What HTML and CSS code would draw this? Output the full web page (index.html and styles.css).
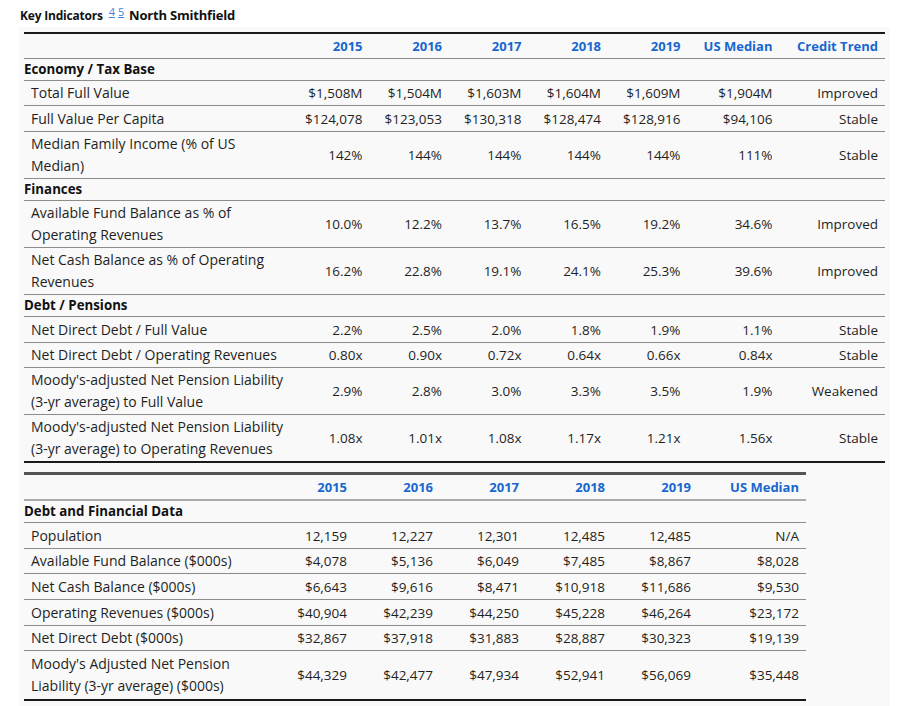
FILE: index.html
```html
<!DOCTYPE html>
<html>
<head>
<meta charset="utf-8">
<link rel="stylesheet" href="styles.css">
</head>
<body>
<div class="title">Key Indicators <sup><a href="#">4</a> <a href="#">5</a></sup> <span class="place">North Smithfield</span></div>
<div class="panel">
<table class="tbl tbl1">
  <colgroup><col class="c-label1"><col class="c-y1"><col class="c-y1"><col class="c-y1"><col class="c-y1"><col class="c-y1"><col class="c-med1"><col></colgroup>
  <thead>
    <tr class="head"><th></th><th>2015</th><th>2016</th><th>2017</th><th>2018</th><th>2019</th><th>US Median</th><th>Credit Trend</th></tr>
  </thead>
  <tbody>
    <tr class="sec"><td>Economy / Tax Base</td><td></td><td></td><td></td><td></td><td></td><td></td><td></td></tr>
    <tr><td>Total Full Value</td><td>$1,508M</td><td>$1,504M</td><td>$1,603M</td><td>$1,604M</td><td>$1,609M</td><td>$1,904M</td><td>Improved</td></tr>
    <tr><td>Full Value Per Capita</td><td>$124,078</td><td>$123,053</td><td>$130,318</td><td>$128,474</td><td>$128,916</td><td>$94,106</td><td>Stable</td></tr>
    <tr><td>Median Family Income (% of US Median)</td><td>142%</td><td>144%</td><td>144%</td><td>144%</td><td>144%</td><td>111%</td><td>Stable</td></tr>
    <tr class="sec"><td>Finances</td><td></td><td></td><td></td><td></td><td></td><td></td><td></td></tr>
    <tr><td>Available Fund Balance as % of Operating Revenues</td><td>10.0%</td><td>12.2%</td><td>13.7%</td><td>16.5%</td><td>19.2%</td><td>34.6%</td><td>Improved</td></tr>
    <tr><td>Net Cash Balance as % of Operating Revenues</td><td>16.2%</td><td>22.8%</td><td>19.1%</td><td>24.1%</td><td>25.3%</td><td>39.6%</td><td>Improved</td></tr>
    <tr class="sec"><td>Debt / Pensions</td><td></td><td></td><td></td><td></td><td></td><td></td><td></td></tr>
    <tr><td>Net Direct Debt / Full Value</td><td>2.2%</td><td>2.5%</td><td>2.0%</td><td>1.8%</td><td>1.9%</td><td>1.1%</td><td>Stable</td></tr>
    <tr><td>Net Direct Debt / Operating Revenues</td><td>0.80x</td><td>0.90x</td><td>0.72x</td><td>0.64x</td><td>0.66x</td><td>0.84x</td><td>Stable</td></tr>
    <tr><td>Moody's-adjusted Net Pension Liability (3-yr average) to Full Value</td><td>2.9%</td><td>2.8%</td><td>3.0%</td><td>3.3%</td><td>3.5%</td><td>1.9%</td><td>Weakened</td></tr>
    <tr><td>Moody's-adjusted Net Pension Liability (3-yr average) to Operating Revenues</td><td>1.08x</td><td>1.01x</td><td>1.08x</td><td>1.17x</td><td>1.21x</td><td>1.56x</td><td>Stable</td></tr>
  </tbody>
</table>
<table class="tbl tbl2">
  <colgroup><col class="c-label2"><col class="c-y2"><col class="c-y2"><col class="c-y2"><col class="c-y2"><col class="c-y2"><col></colgroup>
  <thead>
    <tr class="head"><th></th><th>2015</th><th>2016</th><th>2017</th><th>2018</th><th>2019</th><th>US Median</th></tr>
  </thead>
  <tbody>
    <tr class="sec"><td>Debt and Financial Data</td><td></td><td></td><td></td><td></td><td></td><td></td></tr>
    <tr><td>Population</td><td>12,159</td><td>12,227</td><td>12,301</td><td>12,485</td><td>12,485</td><td>N/A</td></tr>
    <tr><td>Available Fund Balance ($000s)</td><td>$4,078</td><td>$5,136</td><td>$6,049</td><td>$7,485</td><td>$8,867</td><td>$8,028</td></tr>
    <tr><td>Net Cash Balance ($000s)</td><td>$6,643</td><td>$9,616</td><td>$8,471</td><td>$10,918</td><td>$11,686</td><td>$9,530</td></tr>
    <tr><td>Operating Revenues ($000s)</td><td>$40,904</td><td>$42,239</td><td>$44,250</td><td>$45,228</td><td>$46,264</td><td>$23,172</td></tr>
    <tr><td>Net Direct Debt ($000s)</td><td>$32,867</td><td>$37,918</td><td>$31,883</td><td>$28,887</td><td>$30,323</td><td>$19,139</td></tr>
    <tr><td>Moody's Adjusted Net Pension Liability (3-yr average) ($000s)</td><td>$44,329</td><td>$42,477</td><td>$47,934</td><td>$52,941</td><td>$56,069</td><td>$35,448</td></tr>
  </tbody>
</table>
</div>
</body>
</html>
```
FILE: styles.css
```css
html, body {
  margin: 0;
  padding: 0;
  background: #ffffff;
}
body {
  font-family: "Open Sans", "Noto Sans", sans-serif;
  color: #1f1f1f;
  width: 906px;
  height: 706px;
  overflow: hidden;
}
.title {
  font-weight: 700;
  font-size: 12px;
  line-height: 18px;
  padding: 6px 0 0 20px;
  height: 22px;
  box-sizing: border-box;
  color: #111;
  letter-spacing: -0.2px;
  white-space: nowrap;
}
.title .place {
  font-size: 13px;
}
.title sup {
  font-size: 11px;
  font-weight: 400;
  vertical-align: 4px;
  line-height: 0;
  letter-spacing: 0;
  margin: 0 2px 0 3px;
}
.title a {
  color: #3b86e6;
  text-decoration: underline;
}
.panel {
  margin: 5px 0 0 19px;
  width: 871px;
  height: 679px;
  box-sizing: border-box;
  padding: 5px 5px 0 5px;
  background: #f9f9f9;
}
.tbl {
  border-collapse: collapse;
  table-layout: fixed;
  font-size: 13.5px;
}
.tbl1 {
  width: 861px;
  border-top: 2px solid #1a1a1a;
  border-bottom: 2px solid #1a1a1a;
}
.tbl2 {
  width: 782px;
  margin-top: 9px;
  border-top: 3px solid #555555;
  border-bottom: 2px solid #1a1a1a;
}
.c-label1 { width: 266px; }
.c-y1 { width: 79.5px; }
.c-med1 { width: 92px; }
.c-label2 { width: 244px; }
.c-y2 { width: 86px; }

.tbl th {
  color: #1767cf;
  font-weight: 700;
  font-size: 13px;
  text-align: right;
  line-height: 22px;
  padding: 1px 7px 1px 0;
  border-bottom: 1px solid #8c8c8c;
}
.tbl2 th {
  border-bottom: 2px solid #ababab;
}
.tbl td {
  line-height: 22px;
  padding: 1.25px 7px 1px 0;
  text-align: right;
  vertical-align: middle;
  border-bottom: 1px solid #8c8c8c;
}
.tbl2 td {
  padding-top: 1.6px;
}
.tbl2 tbody tr:last-child td {
  padding-top: 2px;
  padding-bottom: 2px;
}
.tbl td:first-child {
  font-size: 14px;
  text-align: left;
  padding-left: 7px;
  padding-right: 3px;
}
.tbl tbody tr:last-child td {
  border-bottom: none;
}
.tbl tr.sec td {
  line-height: 21px;
  padding-top: 0;
  padding-bottom: 0;
}
.tbl tr.sec td:first-child {
  font-weight: 700;
  font-size: 13.3px;
  padding-left: 0;
  color: #111;
}
```
